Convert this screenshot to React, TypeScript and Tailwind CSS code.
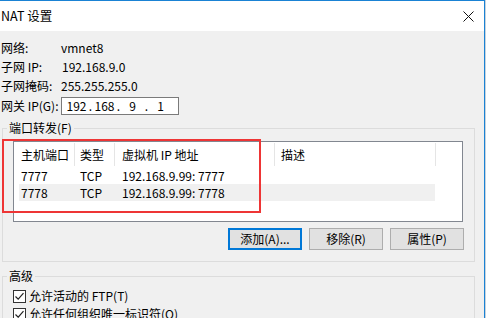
import React from "react";

function Checkbox() {
  return (
    <div className="w-[13px] h-[13px] border border-[#333333] bg-white flex items-center justify-center shrink-0">
      <svg width="11" height="11" viewBox="0 0 11 11">
        <path d="M1.5 5.5 L4.2 8.2 L9.5 2.2" stroke="#222" strokeWidth="1.2" fill="none" />
      </svg>
    </div>
  );
}

function Btn({ label, focused }: { label: string; focused?: boolean }) {
  return (
    <div
      className={
        "w-[74px] h-[22px] flex items-center justify-center bg-[#e1e1e1] text-black " +
        (focused ? "border-2 border-[#0078d7]" : "border border-[#adadad]")
      }
    >
      {label}
    </div>
  );
}

export default function App() {
  return (
    <div className="w-[486px] h-[318px] overflow-hidden flex bg-[#c9d3dc] font-['Noto_Sans_CJK_SC',sans-serif] text-[12px] text-black leading-none">
      <div className="w-[485px] h-full flex flex-col border-t border-r border-[#1a82d4] bg-[#f0f0f0] shrink-0">
        {/* title bar */}
        <div className="h-[30px] bg-white flex items-center justify-between shrink-0">
          <span className="pl-[1px] text-[12.5px]">NAT 设置</span>
          <svg width="11" height="11" viewBox="0 0 11 11" className="mr-[10px]">
            <path d="M0.5 0.5 L10.5 10.5 M10.5 0.5 L0.5 10.5" stroke="#111" strokeWidth="1" />
          </svg>
        </div>
        {/* body */}
        <div className="pt-[7px] flex flex-col">
          <div className="h-[19px] flex items-center">
            <span className="w-[61px] pl-[1px]">网络:</span>
            <span>vmnet8</span>
          </div>
          <div className="h-[19px] flex items-center">
            <span className="w-[62px] pl-[1px]">子网 IP:</span>
            <span>192.168.9.0</span>
          </div>
          <div className="h-[19px] flex items-center">
            <span className="w-[61px] pl-[1px]">子网掩码:</span>
            <span>255.255.255.0</span>
          </div>
          <div className="mt-[2px] h-[18px] flex items-center">
            <span className="w-[61px] pl-[1px]">网关 IP(G):</span>
            <div className="w-[118px] h-[18px] border border-[#7a7a7a] bg-white flex items-center pl-[3px]">
              <span className="w-[23px] text-center">192</span>
              <span className="w-[5px] text-center">.</span>
              <span className="w-[23px] text-center">168</span>
              <span className="w-[5px] text-center">.</span>
              <span className="w-[23px] text-center">9</span>
              <span className="w-[5px] text-center">.</span>
              <span className="w-[23px] text-center">1</span>
            </div>
          </div>

          {/* port forwarding group */}
          <fieldset className="relative mt-[5px] ml-[2px] w-[473px] border border-[#dcdcdc]">
            <legend className="ml-[4px] px-[2px] leading-[16px]">端口转发(F)</legend>
            <div className="ml-[10px] mt-[5px] w-[450px] h-[81px] border border-[#828790] bg-white flex flex-col">
              <div className="h-[25px] flex">
                <div className="w-[61px] pl-[7px] flex items-center border-r border-[#e5e5e5] my-[1px]">主机端口</div>
                <div className="w-[40px] pl-[5px] flex items-center border-r border-[#e5e5e5] my-[1px]">类型</div>
                <div className="w-[160px] pl-[7px] flex items-center border-r border-[#e5e5e5] my-[1px]">虚拟机 IP 地址</div>
                <div className="w-[161px] pl-[6px] flex items-center border-r border-[#e5e5e5] my-[1px]">描述</div>
              </div>
              <div className="ml-[5px] w-[416px] h-[17px] flex items-center">
                <span className="w-[61px] pl-[2px]">7777</span>
                <span className="w-[42px]">TCP</span>
                <span>192.168.9.99: 7777</span>
              </div>
              <div className="ml-[5px] w-[416px] h-[17px] flex items-center bg-[#f0f0f0]">
                <span className="w-[61px] pl-[2px]">7778</span>
                <span className="w-[42px]">TCP</span>
                <span>192.168.9.99: 7778</span>
              </div>
            </div>
            <div className="mt-[6px] mb-[11px] flex justify-end gap-[7px] pr-[10px]">
              <Btn label="添加(A)..." focused />
              <Btn label="移除(R)" />
              <Btn label="属性(P)" />
            </div>
            <div className="absolute left-[-1px] top-[3px] w-[259px] h-[74px] border-2 border-[#ee3535] pointer-events-none" />
          </fieldset>

          {/* advanced group */}
          <fieldset className="mt-[6px] ml-[2px] w-[473px] border border-[#dcdcdc]">
            <legend className="ml-[4px] px-[2px] leading-[16px]">高级</legend>
            <div className="pt-[3px] pl-[10px] flex flex-col">
              <div className="h-[18px] flex items-center gap-[3px]">
                <Checkbox />
                <span>允许活动的 FTP(T)</span>
              </div>
              <div className="h-[18px] flex items-center gap-[3px]">
                <Checkbox />
                <span>允许任何组织唯一标识符(O)</span>
              </div>
            </div>
          </fieldset>
        </div>
      </div>
    </div>
  );
}
